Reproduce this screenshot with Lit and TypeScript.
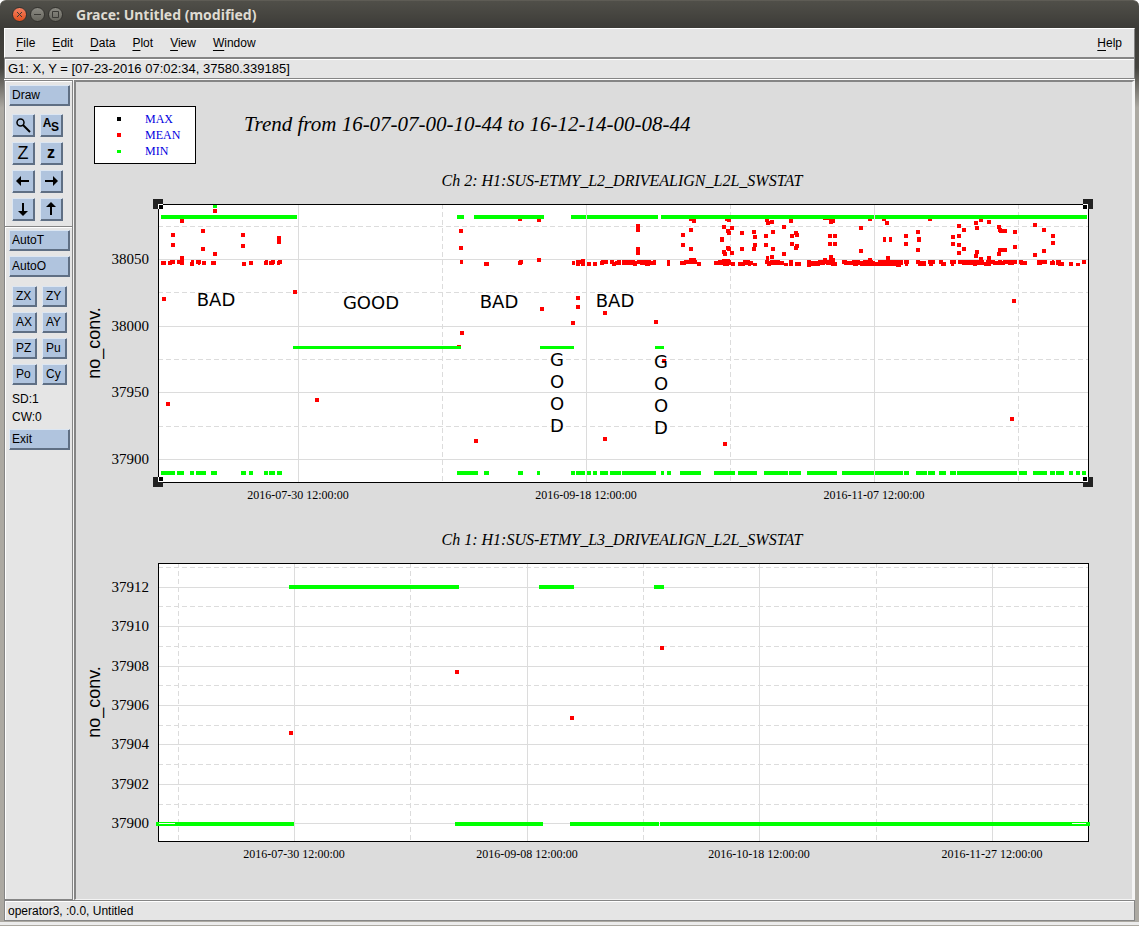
import { LitElement, html, svg, css } from "lit";
import { customElement, property } from "lit/decorators.js";

type Span = [number, number];
type Box = [number, number, number, number];

interface Graph {
  top: number;
  bottom: number;
  title: string;
  xMajor: { x: number; label: string }[];
  xMinor: number[];
  yMajor: { y: number; label: string }[];
  yMinor: number[];
}

const LEFT = 158;
const RIGHT = 1088;

const upper: Graph = {
  top: 204,
  bottom: 482,
  title: "Ch 2: H1:SUS-ETMY_L2_DRIVEALIGN_L2L_SWSTAT",
  xMajor: [
    { x: 298, label: "2016-07-30 12:00:00" },
    { x: 586, label: "2016-09-18 12:00:00" },
    { x: 874, label: "2016-11-07 12:00:00" },
  ],
  xMinor: [442, 730, 1018],
  yMajor: [
    { y: 259, label: "38050" },
    { y: 326, label: "38000" },
    { y: 392, label: "37950" },
    { y: 459, label: "37900" },
  ],
  yMinor: [226, 292, 359, 426],
};

const lower: Graph = {
  top: 563,
  bottom: 841,
  title: "Ch 1: H1:SUS-ETMY_L3_DRIVEALIGN_L2L_SWSTAT",
  xMajor: [
    { x: 294, label: "2016-07-30 12:00:00" },
    { x: 527, label: "2016-09-08 12:00:00" },
    { x: 759, label: "2016-10-18 12:00:00" },
    { x: 992, label: "2016-11-27 12:00:00" },
  ],
  xMinor: [178, 410, 643, 876],
  yMajor: [
    { y: 587, label: "37912" },
    { y: 626, label: "37910" },
    { y: 666, label: "37908" },
    { y: 705, label: "37906" },
    { y: 744, label: "37904" },
    { y: 784, label: "37902" },
    { y: 823, label: "37900" },
  ],
  yMinor: [567, 606, 646, 685, 725, 764, 804],
};

// MIN series of the upper graph, as runs along three levels
const minHigh: Span[] = [[161, 297], [457, 464], [474, 544], [571, 586], [587, 658], [661, 874], [875, 1087]];
const minMid: Span[] = [[293, 461], [540, 574], [655, 664]];
const minLow: Span[] = [
  [161, 175], [177, 184], [190, 194], [196, 206], [211, 217], [241, 246], [249, 253], [264, 268],
  [269, 275], [277, 282], [457, 478], [484, 489], [518, 523], [537, 540], [571, 575], [576, 585],
  [587, 591], [593, 597], [600, 608], [610, 621], [622, 656], [661, 664], [667, 671], [680, 701],
  [714, 735], [738, 757], [764, 788], [789, 801], [807, 837], [842, 874], [875, 903], [904, 909],
  [916, 927], [928, 935], [939, 946], [950, 956], [957, 1017], [1019, 1027], [1033, 1047],
  [1050, 1055], [1056, 1064], [1069, 1073], [1076, 1080], [1082, 1086],
];

// MEAN series: runs lying near 38048 (x1, y1, x2, y2)
const meanBand: Box[] = [
  [161, 261, 166, 265], [168, 261, 172, 265], [170, 260, 175, 264], [177, 260, 184, 264], [180, 261, 184, 265],
  [190, 262, 194, 266], [191, 260, 194, 264], [196, 260, 201, 264], [198, 261, 200, 265], [202, 261, 206, 265],
  [211, 261, 216, 265], [242, 262, 246, 266], [249, 261, 253, 265], [264, 261, 268, 265], [265, 260, 268, 264],
  [269, 261, 274, 265], [271, 260, 275, 264], [277, 261, 280, 265], [278, 260, 282, 264],
  [460, 260, 463, 264], [484, 262, 489, 266], [518, 261, 522, 265], [519, 260, 523, 264],
  [572, 261, 575, 265], [576, 260, 580, 266], [581, 259, 585, 266], [579, 260, 583, 264], [587, 262, 591, 266],
  [593, 262, 597, 266], [600, 261, 604, 265], [601, 260, 608, 264], [610, 260, 614, 264], [612, 262, 616, 266],
  [615, 261, 618, 265], [617, 260, 621, 265], [622, 260, 635, 265], [633, 261, 637, 266], [637, 260, 641, 264],
  [640, 260, 650, 265], [645, 261, 650, 266], [648, 260, 651, 264], [650, 261, 656, 265], [653, 260, 656, 264],
  [667, 260, 670, 266], [680, 261, 686, 265], [684, 260, 697, 264], [689, 258, 696, 263], [697, 262, 701, 266],
  [714, 261, 722, 265], [718, 260, 731, 265], [722, 259, 730, 263], [723, 262, 729, 266], [731, 262, 735, 266],
  [738, 262, 745, 266], [743, 260, 750, 265], [747, 261, 753, 265], [748, 262, 751, 266], [753, 263, 757, 266],
  [765, 260, 769, 264], [766, 256, 769, 262], [767, 261, 771, 266], [770, 260, 774, 264], [769, 262, 780, 265],
  [774, 260, 780, 265], [780, 261, 784, 265], [784, 263, 788, 266], [789, 260, 793, 266], [795, 262, 801, 266],
  [807, 260, 811, 267], [809, 261, 825, 265], [811, 262, 820, 266], [818, 260, 835, 264], [823, 258, 827, 263],
  [826, 261, 833, 265], [829, 255, 833, 262], [831, 258, 835, 263], [831, 262, 837, 266], [842, 260, 847, 264],
  [844, 261, 861, 265], [852, 260, 860, 264], [853, 262, 858, 266], [860, 261, 875, 266], [863, 260, 873, 264],
  [868, 258, 872, 262], [875, 262, 890, 266], [878, 260, 884, 264], [880, 260, 903, 265], [883, 262, 901, 266],
  [896, 263, 901, 267], [904, 260, 909, 264], [905, 262, 908, 266], [916, 260, 920, 264], [918, 261, 926, 266],
  [928, 260, 935, 264], [929, 262, 933, 266], [939, 260, 943, 264], [941, 262, 946, 266], [950, 260, 956, 264],
  [951, 262, 954, 266], [958, 260, 962, 264], [962, 260, 984, 265], [973, 261, 977, 266], [978, 261, 981, 265],
  [984, 262, 991, 266], [986, 260, 995, 264], [993, 261, 1005, 265], [998, 260, 1002, 264], [1003, 260, 1017, 264],
  [1008, 261, 1014, 265], [1019, 260, 1023, 264], [1020, 261, 1027, 265], [1037, 260, 1042, 265],
  [1042, 260, 1047, 264], [1050, 261, 1055, 265], [1052, 260, 1054, 264], [1056, 260, 1061, 265],
  [1058, 262, 1064, 266], [1069, 262, 1073, 266], [1076, 263, 1080, 266], [1082, 260, 1086, 264],
  [636, 224, 640, 232], [636, 247, 640, 255], [720, 237, 724, 242], [883, 237, 886, 242], [889, 237, 892, 242],
  [917, 237, 921, 242], [999, 229, 1007, 233], [998, 248, 1007, 252], [823, 218, 831, 220],
];

// MEAN series: single samples, given by their centre
const meanPoints: Span[] = [
  [182, 221], [173, 235], [173, 245], [203, 231], [203, 249], [215, 211], [215, 254], [243, 235], [243, 246],
  [279, 238], [279, 242], [182, 258], [164, 299], [295, 292], [168, 404], [317, 400], [461, 231], [461, 248],
  [520, 219], [539, 220], [539, 260], [542, 309], [578, 298], [578, 307], [573, 323], [462, 333], [459, 347],
  [476, 441], [605, 439], [605, 313], [656, 322], [1014, 301], [1012, 419], [725, 444], [664, 361],
  [683, 235], [683, 245], [691, 230], [691, 249], [691, 219], [694, 221], [724, 227], [728, 231], [729, 233],
  [732, 228], [727, 219], [729, 220], [724, 252], [725, 254], [728, 248], [729, 249], [732, 253],
  [742, 233], [742, 249], [754, 232], [755, 237], [755, 245], [754, 249], [767, 220], [768, 223], [772, 222],
  [766, 236], [766, 245], [773, 232], [773, 249], [772, 257], [784, 227], [784, 254], [791, 221],
  [792, 236], [792, 244], [796, 233], [797, 235], [797, 246], [796, 248], [831, 222], [833, 221],
  [830, 236], [835, 236], [830, 244], [835, 244], [861, 228], [861, 251], [870, 219], [887, 223],
  [884, 219], [888, 258], [906, 236], [906, 244], [918, 232], [918, 250], [930, 219],
  [953, 237], [953, 244], [959, 226], [959, 236], [959, 245], [959, 253], [964, 230], [964, 249],
  [976, 223], [977, 228], [977, 252], [976, 256], [981, 220], [981, 259], [989, 222], [989, 258],
  [999, 227], [1000, 230], [999, 254], [1015, 232], [1015, 247], [1035, 225], [1035, 255],
  [1044, 230], [1044, 251], [1053, 236], [1053, 243],
];

const lowerHigh: Span[] = [[289, 459], [539, 574], [654, 664]];
const lowerLow: Span[] = [[156, 294], [455, 543], [570, 659], [660, 1090]];
const lowerMean: Span[] = [[291, 733], [457, 672], [572, 718], [662, 648]];

const notes = [
  { x: 216, y: 306, text: "BAD" },
  { x: 371, y: 309, text: "GOOD" },
  { x: 499, y: 308, text: "BAD" },
  { x: 615, y: 307, text: "BAD" },
];

const columns = [
  { x: 557, y: 366, text: "GOOD" },
  { x: 661, y: 368, text: "GOOD" },
];

@customElement("grace-canvas")
export class GraceCanvas extends LitElement {
  static styles = css`
    :host { display: block; background: #dcdcdc; }
    svg { display: block; width: 100%; height: auto; }
    text { font-family: "Liberation Serif", "Times New Roman", serif; fill: #000; }
    .crisp { shape-rendering: crispEdges; }
    .plot { fill: #fff; }
    .frame { fill: none; stroke: #000; }
    .grid { stroke: #dcdcdc; }
    .minor { stroke-dasharray: 5 3; }
    .min { fill: #00ff00; }
    .mean { fill: #ff0000; }
    .max { fill: #000; }
    .handle { fill: #222; }
    .heading { font-size: 21px; font-style: italic; }
    .subtitle { font-size: 16px; font-style: italic; text-anchor: middle; }
    .ytick { font-size: 15px; text-anchor: end; }
    .xtick { font-size: 12px; text-anchor: middle; }
    .axis { font-family: "Liberation Sans", Arial, sans-serif; font-size: 18px; text-anchor: middle; }
    .legend { font-size: 12px; fill: #0000e0; }
    .note { font-family: "DejaVu Sans", sans-serif; font-size: 18px; text-anchor: middle; }
  `;

  private runs(spans: Span[], y: number, h: number) {
    return spans.map(([a, b]) => svg`<rect class="min" x=${a} y=${y} width=${b - a} height=${h}></rect>`);
  }

  private points(list: Span[]) {
    return list.map(([x, y]) => svg`<rect class="mean" x=${x - 2} y=${y - 2} width="4" height="4"></rect>`);
  }

  private backdrop(g: Graph) {
    const v = (x: number, cls: string) =>
      svg`<line class=${cls} x1=${x + 0.5} x2=${x + 0.5} y1=${g.top} y2=${g.bottom}></line>`;
    const h = (y: number, cls: string) =>
      svg`<line class=${cls} x1=${LEFT} x2=${RIGHT} y1=${y + 0.5} y2=${y + 0.5}></line>`;
    return svg`
      <g class="crisp">
        <rect class="plot" x=${LEFT} y=${g.top} width=${RIGHT - LEFT} height=${g.bottom - g.top}></rect>
        ${g.xMajor.map((t) => v(t.x, "grid"))}
        ${g.xMinor.map((x) => v(x, "grid minor"))}
        ${g.yMajor.map((t) => h(t.y, "grid"))}
        ${g.yMinor.map((y) => h(y, "grid minor"))}
        <rect class="frame" x=${LEFT + 0.5} y=${g.top + 0.5} width=${RIGHT - LEFT} height=${g.bottom - g.top}></rect>
      </g>
      <text class="subtitle" x="622" y=${g.top - 18}>${g.title}</text>
      ${g.yMajor.map((t) => svg`<text class="ytick" x="149" y=${t.y + 5}>${t.label}</text>`)}
      ${g.xMajor.map((t) => svg`<text class="xtick" x=${t.x} y=${g.bottom + 17}>${t.label}</text>`)}
      <text class="axis" transform="translate(100 ${(g.top + g.bottom) / 2}) rotate(-90)">no_conv.</text>
    `;
  }

  private handle(x: number, y: number, dx: number, dy: number) {
    return svg`
      <rect class="handle" x=${x - 5} y=${y - 5} width="10" height="10"></rect>
      <rect class="plot" x=${dx > 0 ? x : x - 5} y=${dy > 0 ? y : y - 5} width="5" height="5"></rect>
      <rect class="max" x=${dx > 0 ? x + 1 : x - 5} y=${dy > 0 ? y + 1 : y - 5} width="4" height="4"></rect>
    `;
  }

  render() {
    return html`
      <svg viewBox="76 82 1056 816" role="img" aria-label="Trend graphs">
        <text class="heading" x="244" y="131">Trend from 16-07-07-00-10-44 to 16-12-14-00-08-44</text>
        <g class="crisp">
          <rect class="plot" x="94" y="106" width="102" height="58"></rect>
          <rect class="frame" x="94.5" y="106.5" width="101" height="57"></rect>
          <rect class="max" x="117" y="117" width="4" height="4"></rect>
          <rect class="mean" x="117" y="133" width="4" height="4"></rect>
          <rect class="min" x="117" y="150" width="4" height="3"></rect>
        </g>
        <text class="legend" x="145" y="123">MAX</text>
        <text class="legend" x="145" y="139">MEAN</text>
        <text class="legend" x="145" y="155">MIN</text>

        ${this.backdrop(upper)}
        <g class="crisp">
          ${meanBand.map(([a, b, c, d]) => svg`<rect class="mean" x=${a} y=${b} width=${c - a} height=${d - b}></rect>`)}
          ${this.points(meanPoints)}
          ${this.runs([[213, 217]], 205, 3)}
          ${this.runs(minHigh, 215, 4)}
          ${this.runs(minMid, 346, 3)}
          ${this.runs(minLow, 471, 4)}
          ${this.handle(158, 204, 1, 1)}
          ${this.handle(1088, 204, -1, 1)}
          ${this.handle(158, 482, 1, -1)}
          ${this.handle(1088, 482, -1, -1)}
        </g>
        ${notes.map((n) => svg`<text class="note" x=${n.x} y=${n.y}>${n.text}</text>`)}
        ${columns.map((c) => svg`<text class="note">${[...c.text].map(
          (ch, i) => svg`<tspan x=${c.x} y=${c.y + i * 22}>${ch}</tspan>`)}</text>`)}

        ${this.backdrop(lower)}
        <g class="crisp">
          ${this.runs(lowerHigh, 585, 4)}
          ${this.runs(lowerLow, 822, 4)}
          <rect class="plot" x="159" y="823" width="16" height="1"></rect>
          <rect class="plot" x="1072" y="823" width="14" height="1"></rect>
          ${this.points(lowerMean)}
        </g>
      </svg>
    `;
  }
}

const zoomIcon = svg`<circle cx="6.500" cy="6.500" r="3.500"></circle><path d="M9 9L16 16" stroke-width="2"></path>`;
const leftIcon = svg`<path d="M4 9H15" stroke-width="2"></path><path class="solid" d="M2 9L7 4V14Z"></path>`;
const rightIcon = svg`<path d="M3 9H13" stroke-width="2"></path><path class="solid" d="M16 9L11 4V14Z"></path>`;
const downIcon = svg`<path d="M9 3V13" stroke-width="2"></path><path class="solid" d="M9 16L4 11H14Z"></path>`;
const upIcon = svg`<path d="M9 5V15" stroke-width="2"></path><path class="solid" d="M9 2L4 7H14Z"></path>`;

@customElement("tool-panel")
export class ToolPanel extends LitElement {
  static styles = css`
    :host {
      display: flex;
      flex-direction: column;
      box-sizing: border-box;
      width: 69px;
      padding: 4px 2px 3px 4px;
      background: #e5e5e5;
      border: 1px solid #858585;
      box-shadow: inset 1px 1px #fff;
      font: 12px/16px "Liberation Sans", Arial, sans-serif;
    }
    button {
      box-sizing: border-box;
      margin: 0;
      padding: 0 2px 1px;
      height: 21px;
      border: 1px solid;
      border-color: #dce6f2 #5f6f84 #5f6f84 #dce6f2;
      box-shadow: inset -1px -1px #5f6f84;
      background: #b0c4de;
      color: #000;
      font: inherit;
      text-align: left;
    }
    .wide { width: 61px; }
    .stack { display: flex; flex-direction: column; gap: 5px; }
    .icons { display: grid; grid-template-columns: 23px 23px; gap: 5px; padding: 8px 3px 5px; }
    .icons button { display: grid; place-items: center; height: 23px; padding: 0 1px 1px 0; }
    .pairs { display: grid; grid-template-columns: 25px 25px; gap: 5px; padding: 9px 3px 5px; }
    .pairs button { padding: 0 0 1px 3px; }
    svg { width: 18px; height: 18px; fill: none; stroke: #000; stroke-width: 1.500; overflow: visible; }
    .solid { fill: #000; stroke: none; }
    .glyph { fill: #000; stroke: none; font-family: "Liberation Sans", Arial, sans-serif; font-size: 18px; text-anchor: middle; }
    .bold { font-size: 16px; font-weight: bold; }
    .auto { font-size: 12px; font-weight: bold; }
    hr { margin: 0 -2px 2px -4px; border: 0; border-top: 1px solid #858585; border-bottom: 1px solid #fff; align-self: stretch; }
    p { margin: 0; padding-left: 3px; line-height: 18px; }
    .exit { margin-top: 3px; }
  `;

  private icon(name: string, shape: unknown) {
    return html`<button type="button" aria-label=${name}><svg viewBox="0 0 18 18">${shape}</svg></button>`;
  }

  render() {
    return html`
      <button type="button" class="wide">Draw</button>
      <div class="icons">
        ${this.icon("Zoom", zoomIcon)}
        ${this.icon("Autoscale", svg`<text class="glyph auto" x="5" y="11">A</text><text class="glyph auto" x="13" y="15">S</text>`)}
        ${this.icon("Zoom in", svg`<text class="glyph" x="9" y="15">Z</text>`)}
        ${this.icon("Zoom out", svg`<text class="glyph bold" x="9" y="14">z</text>`)}
        ${this.icon("Left", leftIcon)}
        ${this.icon("Right", rightIcon)}
        ${this.icon("Down", downIcon)}
        ${this.icon("Up", upIcon)}
      </div>
      <hr />
      <div class="stack">
        <button type="button" class="wide">AutoT</button>
        <button type="button" class="wide">AutoO</button>
      </div>
      <div class="pairs">
        ${["ZX", "ZY", "AX", "AY", "PZ", "Pu", "Po", "Cy"].map((t) => html`<button type="button">${t}</button>`)}
      </div>
      <p>SD:1</p>
      <p>CW:0</p>
      <button type="button" class="wide exit">Exit</button>
    `;
  }
}

@customElement("menu-entry")
export class MenuEntry extends LitElement {
  @property() label = "";

  static styles = css`
    :host { display: block; }
    button { margin: 0; padding: 0; border: 0; background: none; color: #000; font: 12px/16px "Liberation Sans", Arial, sans-serif; }
    .key { text-decoration: underline; text-underline-offset: 3px; text-decoration-thickness: 1px; text-decoration-skip-ink: none; }
  `;

  render() {
    return html`<button type="button"><span class="key">${this.label[0]}</span>${this.label.slice(1)}</button>`;
  }
}

@customElement("app-root")
export class AppRoot extends LitElement {
  static styles = css`
    :host {
      display: flex;
      flex-direction: column;
      box-sizing: border-box;
      min-height: 100vh;
      border-bottom: 1px solid #aca9a2;
      font: 12px/16px "Liberation Sans", Arial, sans-serif;
      color: #000;
    }
    .titlebar {
      display: flex;
      align-items: center;
      box-sizing: border-box;
      height: 28px;
      padding: 0 12px;
      border-top: 1px solid #5e5c55;
      border-radius: 6px 6px 0 0;
      background: linear-gradient(#504f49, #3c3b37);
    }
    .controls { display: flex; gap: 3px; margin-right: 13px; }
    .controls button { width: 15px; height: 15px; padding: 0; border: 1px solid #33322e; border-radius: 50%; background: linear-gradient(#8a8982, #68675f); }
    .controls .close { background: linear-gradient(#f58061, #e2501f); }
    .controls svg { display: block; width: 13px; height: 13px; fill: none; stroke: #3b3a36; stroke-width: 1; }
    h1 { margin: 0; font: bold 14px/20px "Noto Sans", "Open Sans", sans-serif; color: #dfdbd2; }
    .window {
      flex: 1;
      display: flex;
      flex-direction: column;
      padding: 0 4px 1px;
      background: linear-gradient(#3c3b37, #45443f 40px, #aca9a2 80px);
      border-bottom: 3px solid #ececec;
    }
    .menubar { display: flex; align-items: center; gap: 17px; box-sizing: border-box; height: 30px; padding: 0 12px 0 11px; background: #e5e5e5; border: 1px solid #858585; border-top-color: #fff; border-left-color: #fff; }
    .spacer { flex: 1; }
    .line { box-sizing: border-box; height: 21px; padding: 2px 3px; background: #e5e5e5; border: 1px solid #858585; box-shadow: inset 1px 1px #fff; }
    .body { flex: 1; display: flex; gap: 1px; background: #f4f4f4; }
    .locator { margin-bottom: 1px; font-size: 13px; box-shadow: inset 1px 1px #fff, 0 1px #fff; }
    tool-panel { flex: none; }
    grace-canvas { flex: 1; border: 2px solid #858585; border-right: 3px solid #f4f4f4; border-bottom: 1px solid #f4f4f4; }
  `;

  render() {
    return html`
      <header class="titlebar">
        <div class="controls">
          <button type="button" class="close" aria-label="Close"><svg viewBox="0 0 13 13"><path d="M4 4L9 9M9 4L4 9"></path></svg></button>
          <button type="button" aria-label="Minimize"><svg viewBox="0 0 13 13"><path d="M3 6.500H10"></path></svg></button>
          <button type="button" aria-label="Maximize"><svg viewBox="0 0 13 13"><path d="M3.500 3.500H9.500V9.500H3.500Z"></path></svg></button>
        </div>
        <h1>Grace: Untitled (modified)</h1>
      </header>
      <div class="window">
        <nav class="menubar">
          ${["File", "Edit", "Data", "Plot", "View", "Window"].map((m) => html`<menu-entry label=${m}></menu-entry>`)}
          <span class="spacer"></span>
          <menu-entry label="Help"></menu-entry>
        </nav>
        <div class="line locator">G1: X, Y = [07-23-2016 07:02:34, 37580.339185]</div>
        <main class="body">
          <tool-panel></tool-panel>
          <grace-canvas></grace-canvas>
        </main>
        <footer class="line">operator3, :0.0, Untitled</footer>
      </div>
    `;
  }
}
